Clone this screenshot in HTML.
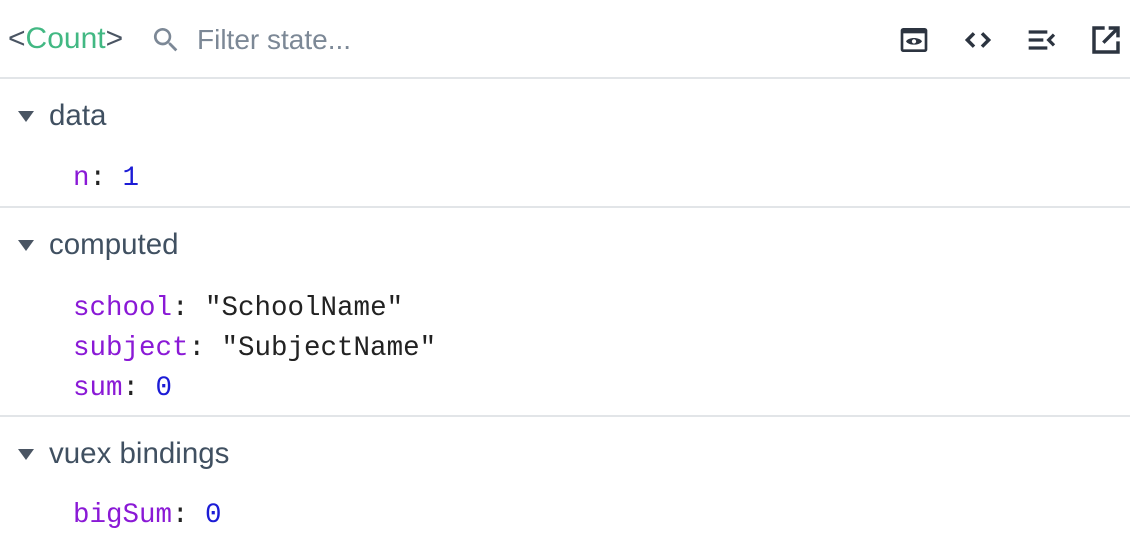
<!DOCTYPE html>
<html><head><style>
body{margin:0;width:1130px;height:560px;background:#fff;position:relative;overflow:hidden;font-family:"Liberation Sans",sans-serif}
.a{position:absolute;white-space:pre}
.hr{position:absolute;left:0;width:1130px;height:2px;background:#e2e5e8}
.sec{color:#2c3e50;font-size:29.5px;opacity:.9}
.tri{position:absolute;width:0;height:0;border-left:8px solid transparent;border-right:8px solid transparent;border-top:11px solid #4a5563}
.m{font-family:"Liberation Mono",monospace;font-size:27.5px;color:#222}
.k{color:#8a19d6}.v{color:#1c1cd6}
</style></head><body>
<div class="a" style="left:8px;top:22px;font-size:30px;color:#4a5563">&lt;<span style="color:#42b883">Count</span>&gt;</div>
<svg class="a" style="left:150px;top:24px" width="32" height="32" viewBox="0 0 24 24"><path d="M15.5 14h-.8l-.3-.3A6.5 6.5 0 1 0 9.5 16a6.5 6.5 0 0 0 4.2-1.6l.3.3v.8l5 5 1.5-1.5zm-6 0a4.5 4.5 0 1 1 0-9 4.5 4.5 0 0 1 0 9z" fill="#7c8896"/></svg>
<div class="a" style="left:197px;top:24px;font-size:28px;color:#7c8896">Filter state...</div>
<svg class="a" style="left:898px;top:24px" width="32" height="32" viewBox="0 0 24 24"><rect x="2" y="3" width="20" height="18" rx="2" fill="#2c3440"/><rect x="4" y="7" width="16" height="12" fill="#fff"/><path d="M6 13c2-3.3 10-3.3 12 0-2 3.3-10 3.3-12 0z" fill="#2c3440"/><circle cx="12" cy="13" r="1.6" fill="#fff"/></svg>
<svg class="a" style="left:962px;top:24px" width="32" height="32" viewBox="0 0 24 24"><path d="M9 7l-5 5 5 5M15 7l5 5-5 5" stroke="#2c3440" stroke-width="2.6" fill="none"/></svg>
<svg class="a" style="left:1026px;top:24px" width="32" height="32" viewBox="0 0 24 24"><path d="M2 6h14M2 12h11M2 18h14M21 8l-4 4 4 4" stroke="#2c3440" stroke-width="2.4" fill="none"/></svg>
<svg class="a" style="left:1090px;top:24px" width="32" height="32" viewBox="0 0 24 24"><path d="M11 3H3v18h18v-8" stroke="#2c3440" stroke-width="2.6" fill="none"/><path d="M14 3h7v7M21 3L10 14" stroke="#2c3440" stroke-width="2.6" fill="none"/></svg>
<div class="hr" style="top:77px"></div>
<div class="tri" style="left:18px;top:111px"></div>
<div class="a sec" style="left:49px;top:99px">data</div>
<div class="a m" style="left:73px;top:163px"><span class="k">n</span>: <span class="v">1</span></div>
<div class="hr" style="top:206px"></div>
<div class="tri" style="left:18px;top:240px"></div>
<div class="a sec" style="left:49px;top:228px">computed</div>
<div class="a m" style="left:73px;top:289px;line-height:40px"><span class="k">school</span>: "SchoolName"
<span class="k">subject</span>: "SubjectName"
<span class="k">sum</span>: <span class="v">0</span></div>
<div class="hr" style="top:415px"></div>
<div class="tri" style="left:18px;top:449px"></div>
<div class="a sec" style="left:49px;top:437px">vuex bindings</div>
<div class="a m" style="left:73px;top:500px"><span class="k">bigSum</span>: <span class="v">0</span></div>
</body></html>
